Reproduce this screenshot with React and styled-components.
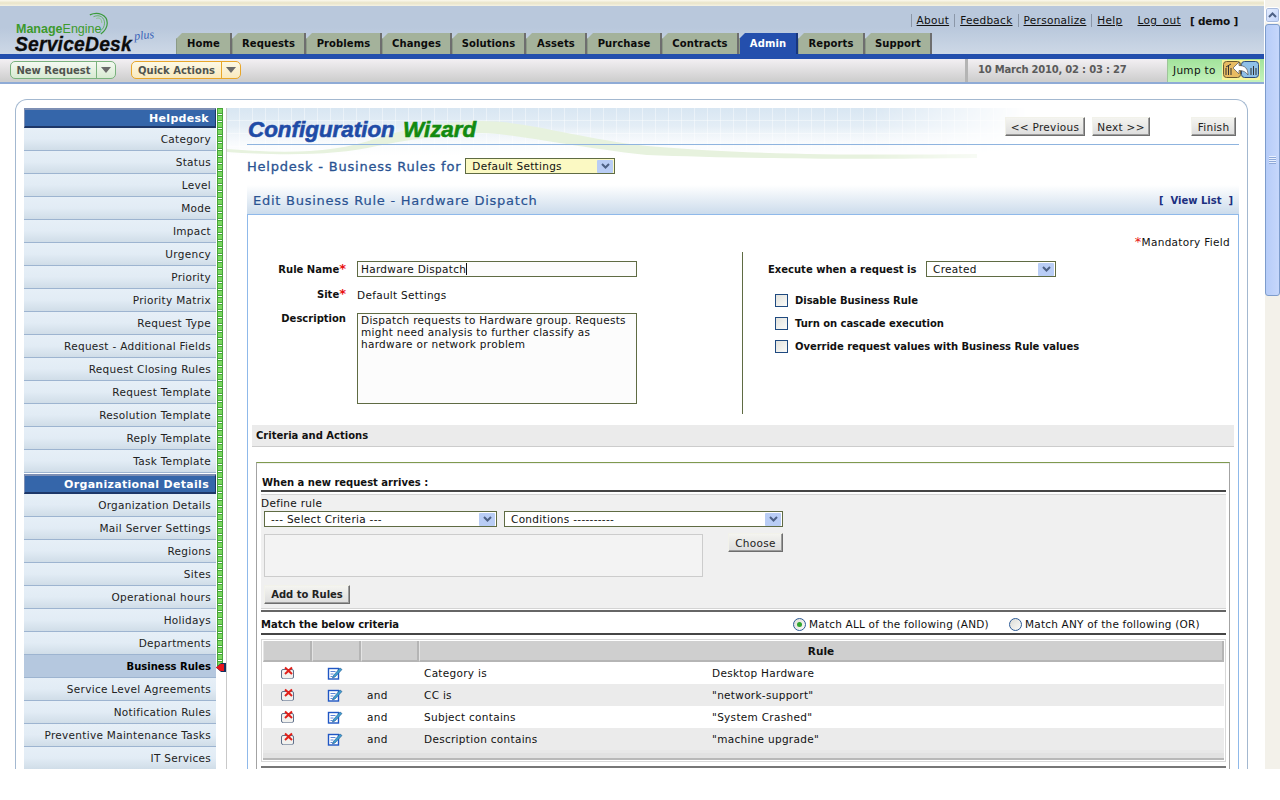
import React from "react";
import styled, { createGlobalStyle } from "styled-components";

const Global = createGlobalStyle`
    html, body {
        margin: 0;
        padding: 0;
        height: 100%;
        overflow: hidden;
        background: #ffffff;
    }
    * {
        box-sizing: border-box;
    }
    body {
        font-family: "DejaVu Sans", Verdana, sans-serif;
        font-size: 10.5px;
        letter-spacing: 0.3px;
        color: #111111;
    }
`;

const TABS = [
    ["Home", 56],
    ["Requests", 74],
    ["Problems", 76],
    ["Changes", 70],
    ["Solutions", 74],
    ["Assets", 61],
    ["Purchase", 75],
    ["Contracts", 77],
    ["Admin", 59],
    ["Reports", 67],
    ["Support", 67],
];

const HELPDESK = [
    "Category",
    "Status",
    "Level",
    "Mode",
    "Impact",
    "Urgency",
    "Priority",
    "Priority Matrix",
    "Request Type",
    "Request - Additional Fields",
    "Request Closing Rules",
    "Request Template",
    "Resolution Template",
    "Reply Template",
    "Task Template",
];

const ORG = [
    "Organization Details",
    "Mail Server Settings",
    "Regions",
    "Sites",
    "Operational hours",
    "Holidays",
    "Departments",
    "Business Rules",
    "Service Level Agreements",
    "Notification Rules",
    "Preventive Maintenance Tasks",
    "IT Services",
];

const RULES = [
    ["", "Category is", "Desktop Hardware"],
    ["and", "CC is", '"network-support"'],
    ["and", "Subject contains", '"System Crashed"'],
    ["and", "Description contains", '"machine upgrade"'],
];

function Chevron() {
    return (
        <svg width="9" height="6" viewBox="0 0 9 6">
            <path d="M1 1l3.500 3.500L8 1" fill="none" stroke="#4d6185" strokeWidth="2" />
        </svg>
    );
}

function Select({ value, width, tone }) {
    return (
        <SelectBox $w={width} $tone={tone}>
            <span>{value}</span>
            <SelectArrow>
                <Chevron />
            </SelectArrow>
        </SelectBox>
    );
}

function DeleteIcon() {
    return (
        <svg width="16" height="14" viewBox="0 0 16 14">
            <rect x="1.500" y="3.500" width="12" height="9" rx="1.500" fill="#f1f1ee" stroke="#5f6f8a" />
            <path d="M3 12.500h10" stroke="#9aa5b5" />
            <path d="M5 1.500l7 6.500M12 1.500L5 8" stroke="#e0201a" strokeWidth="2" />
        </svg>
    );
}

function EditIcon() {
    return (
        <svg width="16" height="14" viewBox="0 0 16 14">
            <rect x="1.500" y="2.500" width="10" height="10.500" fill="#ffffff" stroke="#1f56c4" strokeWidth="1.400" />
            <path d="M3.500 5.500h5M3.500 8h3M3.500 10.500h2" stroke="#5e86d8" />
            <path d="M6 10l7-8 2 1.500-7 7.500-2.500 1z" fill="#3f9fd0" stroke="#24558f" strokeWidth="0.600" />
        </svg>
    );
}

function JumpIcon() {
    return (
        <JumpFrame>
            <svg width="36" height="20" viewBox="0 0 36 20">
                <rect x="0.500" y="1.500" width="17" height="16" rx="3" fill="#e8bb62" stroke="#6a5a30" />
                <rect x="18.500" y="1.500" width="17" height="16" rx="3" fill="#8fc0e8" stroke="#2c4a78" />
                <path d="M3 8v7M5.500 6v9M8 8v7M3 7l5-3M28 8v7M30.500 6v9M33 8v7" stroke="#333333" strokeWidth="1" />
                <path
                    d="M10 8l6-6v3.500c6 0 9 3 9 9.500-2-3-4.500-4.500-9-4.500v3.500z"
                    fill="#ffffff"
                    stroke="#555555"
                    strokeWidth="0.700"
                />
            </svg>
        </JumpFrame>
    );
}

function Logo() {
    return (
        <LogoBox>
            <LogoArcs width="22" height="24" viewBox="0 0 24 26">
                <path d="M2 3c9-4 19 0 19 9 0 5-3 9-7 12" fill="none" stroke="#3b9b3c" strokeWidth="1.300" />
                <path d="M6 5c7-3 12 1 12 7 0 4-2 7-5 9" fill="none" stroke="#5cb05c" />
                <path d="M9 7c5-2 6 2 6 5" fill="none" stroke="#86c686" />
            </LogoArcs>
            <LogoTop>
                <b>Manage</b>Engine
            </LogoTop>
            <LogoName>ServiceDesk</LogoName>
            <LogoPlus>plus</LogoPlus>
        </LogoBox>
    );
}

export default function App() {
    return (
        <Frame>
            <Global />
            <Page>
                <TopStrip />
                <Header>
                    <Logo />
                    <HeaderRight>
                        <TopLinks>
                            <TopLink>About</TopLink>
                            <TopLink>Feedback</TopLink>
                            <TopLink>Personalize</TopLink>
                            <TopLink>Help</TopLink>
                            <LogOut>Log out</LogOut>
                            <Who>[ demo ]</Who>
                        </TopLinks>
                        <Tabs>
                            {TABS.map(([name, w]) => (
                                <Tab key={name} $w={w} $active={name === "Admin"}>
                                    {name}
                                </Tab>
                            ))}
                        </Tabs>
                    </HeaderRight>
                </Header>
                <BlueBar />
                <Toolbar>
                    <ToolButtons>
                        <SplitButton $w={106} $tone="green">
                            <SplitLabel>New Request</SplitLabel>
                            <SplitArrow $tone="green" />
                        </SplitButton>
                        <SplitButton $w={110} $tone="orange">
                            <SplitLabel>Quick Actions</SplitLabel>
                            <SplitArrow $tone="orange" />
                        </SplitButton>
                    </ToolButtons>
                    <DateCell>10 March 2010, 02 : 03 : 27</DateCell>
                    <JumpCell>
                        <JumpText>Jump to</JumpText>
                        <JumpIcon />
                    </JumpCell>
                </Toolbar>

                <Panel>
                    <Sidebar>
                        <Menu>
                            <MenuHead>Helpdesk</MenuHead>
                            {HELPDESK.map((item) => (
                                <MenuItem key={item}>{item}</MenuItem>
                            ))}
                            <MenuHead $gap>Organizational Details</MenuHead>
                            {ORG.map((item) => (
                                <MenuItem key={item} $active={item === "Business Rules"}>
                                    {item}
                                </MenuItem>
                            ))}
                        </Menu>
                        <Rail>
                            <Marker width="11" height="11" viewBox="0 0 11 11">
                                <path d="M0 5.500L5 1h5v9H5z" fill="#14305e" />
                                <path d="M0 5.500L4.500 2H8v7H4.500z" fill="#e8141c" />
                            </Marker>
                        </Rail>
                    </Sidebar>

                    <Content>
                        <Banner>
                            <BannerWave viewBox="0 0 800 60">
                                <path
                                    d="M0 41C60 46 110 45 150 30C180 20 220 13 255 13C300 13 350 30 420 38C500 45 600 48 750 46L750 50C600 52 500 50 420 47C340 38 290 26 255 25C220 26 180 32 150 38C110 47 60 48 0 44Z"
                                    fill="#e7f2de"
                                />
                            </BannerWave>
                        </Banner>
                        <WizardHead>
                            <WizardTitle>
                                Configuration <em>Wizard</em>
                            </WizardTitle>
                            <WizardButtons>
                                <GrayButton $w={80}>&lt;&lt; Previous</GrayButton>
                                <GrayButton $w={58}>Next &gt;&gt;</GrayButton>
                                <FinishButton $w={45}>Finish</FinishButton>
                            </WizardButtons>
                        </WizardHead>
                        <ForRow>
                            <ForLabel>Helpdesk - Business Rules for</ForLabel>
                            <Select value="Default Settings" width={150} tone="yellow" />
                        </ForRow>
                        <EditBar>
                            <EditTitle>Edit Business Rule - Hardware Dispatch</EditTitle>
                            <ViewList>[ &nbsp;View List &nbsp;]</ViewList>
                        </EditBar>

                        <FormBox>
                            <Mandatory>
                                <Star>*</Star>Mandatory Field
                            </Mandatory>
                            <FormColumns>
                                <LeftForm>
                                    <FieldRow $h={25}>
                                        <FieldLabel $top={3}>
                                            Rule Name<Star>*</Star>
                                        </FieldLabel>
                                        <TextField>
                                            Hardware Dispatch
                                            <Caret />
                                        </TextField>
                                    </FieldRow>
                                    <FieldRow $h={27}>
                                        <FieldLabel $top={3}>
                                            Site<Star>*</Star>
                                        </FieldLabel>
                                        <SiteValue>Default Settings</SiteValue>
                                    </FieldRow>
                                    <FieldRow $h={91}>
                                        <FieldLabel $top={0}>Description</FieldLabel>
                                        <DescArea
                                            readOnly
                                            defaultValue="Dispatch requests to Hardware group. Requests might need analysis to further classify as hardware or network problem"
                                        />
                                    </FieldRow>
                                </LeftForm>
                                <RightForm>
                                    <ExecuteRow>
                                        <ExecuteLabel>Execute when a request is</ExecuteLabel>
                                        <Select value="Created" width={130} />
                                    </ExecuteRow>
                                    <CheckList>
                                        <CheckRow>
                                            <CheckBox />
                                            Disable Business Rule
                                        </CheckRow>
                                        <CheckRow>
                                            <CheckBox />
                                            Turn on cascade execution
                                        </CheckRow>
                                        <CheckRow>
                                            <CheckBox />
                                            Override request values with Business Rule values
                                        </CheckRow>
                                    </CheckList>
                                </RightForm>
                            </FormColumns>
                            <SectionBar>Criteria and Actions</SectionBar>
                            <CriteriaBox>
                                <ArriveTitle>When a new request arrives :</ArriveTitle>
                                <DefinePanel>
                                    <DefineLabel>Define rule</DefineLabel>
                                    <SelectRow>
                                        <Select value="--- Select Criteria ---" width={233} />
                                        <Select value="Conditions ----------" width={279} />
                                    </SelectRow>
                                    <ChooseRow>
                                        <ValueBox />
                                        <GrayButton $w={55}>Choose</GrayButton>
                                    </ChooseRow>
                                    <AddButton>Add to Rules</AddButton>
                                </DefinePanel>
                                <MatchRow>
                                    <MatchTitle>Match the below criteria</MatchTitle>
                                    <RadioGroup>
                                        <RadioItem $w={216}>
                                            <Radio $on />
                                            Match ALL of the following (AND)
                                        </RadioItem>
                                        <RadioItem $w={217}>
                                            <Radio />
                                            Match ANY of the following (OR)
                                        </RadioItem>
                                    </RadioGroup>
                                </MatchRow>
                                <RuleTable>
                                    <HeadRow>
                                        <HeadCell />
                                        <HeadCell />
                                        <HeadCell />
                                        <HeadCell>
                                            <b>Rule</b>
                                        </HeadCell>
                                    </HeadRow>
                                    {RULES.map(([join, field, value], i) => (
                                        <RuleRow key={field} $odd={i % 2 === 1}>
                                            <IconCell>
                                                <DeleteIcon />
                                            </IconCell>
                                            <IconCell $shift>
                                                <EditIcon />
                                            </IconCell>
                                            <JoinCell>{join}</JoinCell>
                                            <FieldCell>{field}</FieldCell>
                                            <span>{value}</span>
                                        </RuleRow>
                                    ))}
                                    <TableFoot />
                                </RuleTable>
                                <BottomRule />
                            </CriteriaBox>
                        </FormBox>
                    </Content>
                </Panel>
            </Page>
            <Scrollbar>
                <ScrollButton>
                    <svg width="9" height="6" viewBox="0 0 9 6">
                        <path d="M1 5l3.500-3.500L8 5" fill="none" stroke="#4d6185" strokeWidth="2" />
                    </svg>
                </ScrollButton>
                <ScrollThumb>
                    <ThumbGrip />
                </ScrollThumb>
            </Scrollbar>
        </Frame>
    );
}

const Frame = styled.div`
    display: flex;
    width: 1280px;
    height: 769px;
    overflow: hidden;
    background: #ffffff;
`;

const Page = styled.div`
    width: 1264px;
    flex: none;
`;

const TopStrip = styled.div`
    height: 6px;
    background: linear-gradient(#fbf9ee, #e9e4c8 50%, #f4f2e4);
`;

const Header = styled.div`
    display: flex;
    height: 48px;
    background: linear-gradient(#b9c8dc 0%, #b9c8dc 45%, #cdd8e6 100%);
`;

const LogoBox = styled.div`
    position: relative;
    width: 176px;
    flex: none;
    padding: 17px 0 0 15px;
`;

const LogoArcs = styled.svg`
    position: absolute;
    left: 88px;
    top: 6px;
`;

const LogoTop = styled.div`
    font-family: "Liberation Sans", Arial, sans-serif;
    font-size: 12.5px;
    line-height: 13px;
    letter-spacing: 0;
    color: #3c9a2c;
    padding-left: 1px;
    b {
        font-weight: 700;
    }
`;

const LogoName = styled.div`
    font-family: "Liberation Sans", Arial, sans-serif;
    font-size: 19.3px;
    font-weight: 700;
    font-style: italic;
    line-height: 17px;
    letter-spacing: 0.2px;
    color: #0c0c0c;
    -webkit-text-stroke: 0.3px currentColor;
`;

const LogoPlus = styled.div`
    position: absolute;
    left: 134px;
    top: 22px;
    font-family: "Liberation Serif", serif;
    font-style: italic;
    font-size: 12px;
    letter-spacing: 0;
    color: #3a63b8;
    transform: rotate(-6deg);
`;

const HeaderRight = styled.div`
    flex: 1;
    display: flex;
    flex-direction: column;
    justify-content: space-between;
`;

const TopLinks = styled.div`
    display: flex;
    justify-content: flex-end;
    align-items: center;
    height: 13px;
    margin-top: 8px;
    padding-right: 26px;
`;

const TopLink = styled.a`
    padding: 0 5px;
    border-left: 1px solid #8b97a8;
    text-decoration: underline;
    color: #111111;
    line-height: 13px;
`;

const LogOut = styled(TopLink)`
    margin-left: 10px;
    border-left: 0;
    padding: 0;
    word-spacing: 2px;
`;

const Who = styled.span`
    margin-left: 9px;
    font-weight: 700;
    letter-spacing: -0.2px;
`;

const Tabs = styled.div`
    display: flex;
    height: 21px;
`;

const Tab = styled.div`
    width: ${(p) => p.$w}px;
    display: flex;
    align-items: center;
    justify-content: center;
    font-size: 10px;
    font-weight: 700;
    letter-spacing: 0.1px;
    color: ${(p) => (p.$active ? "#ffffff" : "#0c0c0c")};
    background: ${(p) => (p.$active ? "#244fad" : "#a4b29b")};
    border-right: 2px solid ${(p) => (p.$active ? "#17367e" : "#6e6e6e")};
    border-left: 1px solid #8b9a86;
    clip-path: polygon(6px 0, 100% 0, 100% 100%, 0 100%, 0 6px);
`;

const BlueBar = styled.div`
    height: 5px;
    background: #234fad;
`;

const Toolbar = styled.div`
    display: flex;
    height: 25px;
    background: linear-gradient(#f3f0f3, #cfcfcf 92%);
    border-bottom: 2px solid #8fabd6;
`;

const ToolButtons = styled.div`
    flex: 1;
    display: flex;
    align-items: center;
    gap: 15px;
    padding: 0 0 2px 10px;
`;

const TONES = {
    green: { border: "#79b27d", bg: "linear-gradient(#f4f9f1, #d7ead2)" },
    orange: { border: "#e8a62a", bg: "linear-gradient(#fdf9e6, #f9e9bd)" },
};

const SplitButton = styled.div`
    width: ${(p) => p.$w}px;
    height: 18px;
    display: flex;
    border: 1px solid ${(p) => TONES[p.$tone].border};
    border-radius: 5px;
    background: ${(p) => TONES[p.$tone].bg};
    overflow: hidden;
`;

const SplitLabel = styled.div`
    flex: 1;
    display: flex;
    align-items: center;
    justify-content: center;
    padding-top: 1px;
    font-size: 10px;
    font-weight: 700;
    letter-spacing: 0;
    color: #50544f;
`;

const SplitArrow = styled.div`
    position: relative;
    width: 19px;
    flex: none;
    border-left: 1px solid ${(p) => TONES[p.$tone].border};
    &::after {
        content: "";
        position: absolute;
        left: 4px;
        top: 5px;
        border: 5px solid transparent;
        border-top: 6px solid #6a6a6a;
        border-bottom: 0;
    }
`;

const DateCell = styled.div`
    width: 202px;
    display: flex;
    align-items: center;
    padding: 0 0 2px 10px;
    border-left: 3px solid #b4b4b4;
    font-size: 10px;
    font-weight: 700;
    letter-spacing: -0.22px;
    color: #5a5a5a;
`;

const JumpCell = styled.div`
    width: 97px;
    display: flex;
    align-items: center;
    padding-left: 5px;
    background: linear-gradient(#a2e39b, #c4f2bc);
    border-left: 1px solid #9ec59a;
`;

const JumpText = styled.span`
    width: 49px;
    flex: none;
    padding-bottom: 2px;
`;

const JumpFrame = styled.div`
    display: flex;
    width: 38px;
    height: 20px;
    padding: 0 1px;
    margin-bottom: 1px;
    background: #f8f59a;
`;

const Panel = styled.div`
    display: flex;
    margin: 15px 16px 0 15px;
    height: 700px;
    padding: 8px 8px 0 8px;
    border: 1px solid #a3b8d0;
    border-bottom: 0;
    border-radius: 12px 12px 0 0;
`;

const Sidebar = styled.div`
    display: flex;
    width: 203px;
    flex: none;
    border-right: 1px solid #c9c9c9;
`;

const Menu = styled.div`
    width: 192px;
    flex: none;
`;

const MenuHead = styled.div`
    height: 20px;
    margin-top: ${(p) => (p.$gap ? "1px" : "0")};
    display: flex;
    align-items: center;
    justify-content: flex-end;
    padding-right: 6px;
    font-size: 11px;
    font-weight: 700;
    letter-spacing: 0.3px;
    color: #ffffff;
    background: #3566aa;
    border-top: 2px solid #7d8fb4;
    border-left: 1px solid #7d8fb4;
    border-bottom: 2px solid #1d3768;
    border-right: 1px solid #1d3768;
`;

const MenuItem = styled.div`
    height: 23px;
    display: flex;
    align-items: center;
    justify-content: flex-end;
    padding-right: 5px;
    font-size: ${(p) => (p.$active ? "10px" : "10.5px")};
    font-weight: ${(p) => (p.$active ? 700 : 400)};
    letter-spacing: ${(p) => (p.$active ? "0" : "0.3px")};
    color: ${(p) => (p.$active ? "#000000" : "#222222")};
    background: ${(p) => (p.$active ? "#b5c8df" : "linear-gradient(#e6eff7, #e2ecf5 50%, #d0dde8)")};
    border-bottom: 1px solid #9db4d0;
`;

const Rail = styled.div`
    position: relative;
    width: 6px;
    height: 558px;
    margin-left: 1px;
    flex: none;
    background-image:
        linear-gradient(90deg, #47a33a 1px, transparent 1px, transparent 5px, #47a33a 5px),
        repeating-linear-gradient(#47a33a 0 1px, #7bd960 1px 5px, #47a33a 5px 6px, #ffffff 6px 7px);
`;

const Marker = styled.svg`
    position: absolute;
    left: -1px;
    bottom: -7px;
`;

const Content = styled.div`
    position: relative;
    flex: 1;
    padding: 0 0 0 20px;
    min-width: 0;
`;

const Banner = styled.div`
    position: absolute;
    left: 0;
    top: 0;
    width: 800px;
    height: 60px;
    background-image:
        linear-gradient(90deg, #ffffff00 12px, #ffffff66 12px),
        linear-gradient(#ffffff00 12px, #ffffff66 12px),
        linear-gradient(rgba(255, 255, 255, 0) 30%, #ffffff 80%),
        linear-gradient(#d8e6f2, #ffffff);
    background-size: 13px 13px, 13px 13px, 100% 100%, 100% 100%;
    -webkit-mask-image: linear-gradient(90deg, #000 80%, transparent);
    mask-image: linear-gradient(90deg, #000 80%, transparent);
`;

const BannerWave = styled.svg`
    position: absolute;
    left: 0;
    top: 0;
    width: 800px;
    height: 60px;
`;

const WizardHead = styled.div`
    position: relative;
    display: flex;
    justify-content: space-between;
    height: 37px;
    border-bottom: 1px solid #8fb4df;
`;

const WizardTitle = styled.div`
    padding: 9px 0 0 1px;
    font-family: "Liberation Sans", Arial, sans-serif;
    font-size: 22.4px;
    font-weight: 700;
    font-style: italic;
    letter-spacing: 0;
    line-height: 26px;
    color: #1f4ba6;
    -webkit-text-stroke: 0.6px currentColor;
    em {
        margin-left: 2px;
        color: #128a10;
    }
`;

const WizardButtons = styled.div`
    display: flex;
    gap: 7px;
    padding: 9px 3px 0 0;
    align-items: flex-start;
`;

const GrayButton = styled.div`
    width: ${(p) => p.$w}px;
    height: 19px;
    flex: none;
    display: flex;
    align-items: center;
    justify-content: center;
    color: #222222;
    background: linear-gradient(#f4f4f0, #dddddd);
    border: 1px solid;
    border-color: #f2f2ea #6e6e6e #6e6e6e #f2f2ea;
    box-shadow: inset -1px -1px 0 #9c9c9c;
`;

const FinishButton = styled(GrayButton)`
    margin-left: 34px;
`;

const ForRow = styled.div`
    position: relative;
    display: flex;
    align-items: center;
    gap: 4px;
    height: 16px;
    margin-top: 13px;
`;

const ForLabel = styled.div`
    font-size: 13px;
    font-weight: 400;
    letter-spacing: 0.78px;
    color: #2a5392;
    -webkit-text-stroke: 0.3px currentColor;
`;

const SelectBox = styled.div`
    width: ${(p) => p.$w}px;
    height: 16px;
    flex: none;
    display: flex;
    align-items: center;
    justify-content: space-between;
    padding: 0 1px 0 6px;
    background: ${(p) => (p.$tone === "yellow" ? "#fbf9c3" : "#ffffff")};
    border: 1px solid #5f6b43;
`;

const SelectArrow = styled.div`
    width: 16px;
    height: 13px;
    display: flex;
    align-items: center;
    justify-content: center;
    background: #b9cdf5;
    border-radius: 1px;
`;

const EditBar = styled.div`
    display: flex;
    align-items: center;
    justify-content: space-between;
    height: 29px;
    margin-top: 11px;
    padding: 1px 6px 0 6px;
    background: linear-gradient(#ffffff, #ccdcec);
`;

const EditTitle = styled.div`
    font-size: 13px;
    letter-spacing: 0.75px;
    color: #2a5392;
    -webkit-text-stroke: 0.2px currentColor;
`;

const ViewList = styled.div`
    font-size: 10px;
    font-weight: 700;
    letter-spacing: 0;
    color: #1b2f80;
`;

const FormBox = styled.div`
    height: 560px;
    padding: 21px 4px 0 4px;
    border: 1px solid #8fb9ea;
    border-bottom: 0;
`;

const Mandatory = styled.div`
    height: 13px;
    text-align: right;
    line-height: 13px;
    padding-right: 4px;
`;

const Star = styled.span`
    color: #e81010;
    font-size: 13px;
    line-height: 10px;
`;

const FormColumns = styled.div`
    display: flex;
    margin-top: 3px;
    height: 162px;
`;

const LeftForm = styled.div`
    width: 491px;
    flex: none;
    padding-top: 9px;
    display: flex;
    flex-direction: column;
    border-right: 1px solid #5f6b43;
`;

const FieldRow = styled.div`
    display: flex;
    height: ${(p) => p.$h}px;
    flex: none;
`;

const FieldLabel = styled.div`
    width: 94px;
    flex: none;
    padding-top: ${(p) => p.$top}px;
    text-align: right;
    font-weight: 700;
    font-size: 10px;
    letter-spacing: 0;
`;

const TextField = styled.div`
    width: 280px;
    height: 16px;
    margin-left: 11px;
    display: flex;
    align-items: center;
    padding-left: 3px;
    background: #fcfcfc;
    border: 1px solid #5f6b43;
`;

const Caret = styled.span`
    display: block;
    width: 1px;
    height: 12px;
    background: #111111;
`;

const SiteValue = styled.div`
    margin-left: 11px;
    padding-top: 3px;
`;

const DescArea = styled.textarea`
    display: block;
    width: 280px;
    height: 91px;
    margin-left: 11px;
    padding: 0 3px;
    resize: none;
    overflow: hidden;
    outline: 0;
    font: inherit;
    line-height: 12px;
    letter-spacing: inherit;
    color: #111111;
    background: #fcfcfc;
    border: 1px solid #5f6b43;
    border-radius: 0;
`;

const RightForm = styled.div`
    flex: 1;
    padding: 9px 0 0 25px;
`;

const ExecuteRow = styled.div`
    display: flex;
    align-items: center;
    height: 16px;
`;

const ExecuteLabel = styled.div`
    width: 158px;
    flex: none;
    font-size: 10px;
    font-weight: 700;
    letter-spacing: 0;
`;

const CheckList = styled.div`
    display: flex;
    flex-direction: column;
    margin-top: 17px;
    padding-left: 7px;
    gap: 10px;
`;

const CheckRow = styled.div`
    display: flex;
    align-items: center;
    gap: 7px;
    height: 13px;
    font-size: 10px;
    font-weight: 700;
    letter-spacing: -0.04px;
`;

const CheckBox = styled.span`
    width: 13px;
    height: 13px;
    flex: none;
    background: linear-gradient(135deg, #e2e2dc, #fbfbf9);
    border: 1px solid #1f4a80;
`;

const SectionBar = styled.div`
    display: flex;
    align-items: center;
    height: 22px;
    margin-top: 11px;
    padding-left: 4px;
    font-size: 10px;
    font-weight: 700;
    letter-spacing: 0;
    background: #ebebeb;
    border-bottom: 1px solid #cccccc;
`;

const CriteriaBox = styled.div`
    margin: 15px 4px 0 4px;
    padding: 0 3px 0 4px;
    height: 400px;
    border: 1px solid #a3a3a3;
    border-top: 1px solid #7f9a4f;
    border-bottom: 0;
    box-shadow: inset 0 1px 0 #f0f0f0;
`;

const ArriveTitle = styled.div`
    height: 29px;
    padding: 14px 0 0 1px;
    font-size: 10px;
    font-weight: 700;
    letter-spacing: 0;
    border-bottom: 2px solid #454545;
`;

const DefinePanel = styled.div`
    height: 115px;
    margin-top: 2px;
    padding: 1px 3px 0 0;
    background: #f0f0f0;
    border-top: 1px solid #d4d4d4;
    border-bottom: 1px solid #d4d4d4;
`;

const DefineLabel = styled.div`
    height: 14px;
    line-height: 14px;
`;

const SelectRow = styled.div`
    display: flex;
    gap: 7px;
    margin-top: 1px;
    padding-left: 3px;
`;

const ChooseRow = styled.div`
    display: flex;
    align-items: flex-start;
    margin-top: 6px;
    padding-left: 3px;
    gap: 25px;
`;

const ValueBox = styled.div`
    width: 439px;
    height: 43px;
    margin-top: 1px;
    background: #f3f3f3;
    border: 1px solid #cccccc;
`;

const AddButton = styled(GrayButton)`
    width: 86px;
    margin: 8px 0 0 3px;
    font-size: 10px;
    font-weight: 700;
    letter-spacing: 0;
`;

const MatchRow = styled.div`
    display: flex;
    align-items: center;
    justify-content: space-between;
    height: 25px;
    margin-top: 1px;
    padding-top: 3px;
    border-top: 2px solid #666666;
    border-bottom: 2px solid #454545;
`;

const MatchTitle = styled.div`
    font-size: 10px;
    font-weight: 700;
    letter-spacing: 0;
`;

const RadioGroup = styled.div`
    display: flex;
`;

const RadioItem = styled.div`
    width: ${(p) => p.$w}px;
    display: flex;
    align-items: center;
    gap: 3px;
    letter-spacing: 0.2px;
`;

const Radio = styled.span`
    position: relative;
    width: 13px;
    height: 13px;
    flex: none;
    border: 1px solid #2c5a96;
    border-radius: 50%;
    background: linear-gradient(135deg, #dcdcd6, #fbfbf9);
    &::after {
        content: "";
        display: ${(p) => (p.$on ? "block" : "none")};
        position: absolute;
        left: 3px;
        top: 3px;
        width: 5px;
        height: 5px;
        border-radius: 50%;
        background: #2fa62f;
    }
`;

const RuleTable = styled.div`
    margin: 4px 0 0;
    border: 1px solid #d8d8d8;
    padding: 1px;
`;

const HeadRow = styled.div`
    display: grid;
    grid-template-columns: 49px 49px 58px 1fr;
    height: 21px;
`;

const HeadCell = styled.div`
    display: flex;
    align-items: center;
    justify-content: center;
    background: #cfcfcf;
    border-bottom: 2px solid #b5b5b5;
    border-right: 2px solid #b5b5b5;
    border-left: 1px solid #e4e4e4;
    letter-spacing: 0;
`;

const RuleRow = styled.div`
    display: grid;
    grid-template-columns: 49px 49px 58px 293px 1fr;
    align-items: center;
    height: 22px;
    background: ${(p) => (p.$odd ? "#ebebeb" : "#ffffff")};
`;

const IconCell = styled.div`
    display: flex;
    justify-content: center;
    padding-right: ${(p) => (p.$shift ? "3px" : "0")};
`;

const JoinCell = styled.div`
    padding-left: 6px;
`;

const FieldCell = styled.div`
    padding-left: 5px;
`;

const TableFoot = styled.div`
    height: 10px;
    background: #e2e2e2;
    border-bottom: 2px solid #b8b8b8;
    border-top: 3px solid #e8e8e8;
`;

const BottomRule = styled.div`
    margin-top: 4px;
    height: 2px;
    background: #777777;
`;

const Scrollbar = styled.div`
    width: 16px;
    flex: none;
    padding-top: 7px;
    background: #f3f1ea;
    border-left: 1px solid #ffffff;
`;

const ScrollButton = styled.div`
    height: 16px;
    display: flex;
    align-items: center;
    justify-content: center;
    background: linear-gradient(135deg, #e6eefe, #c0d3fb);
    border: 1px solid #ffffff;
    border-radius: 3px;
    box-shadow: 0 0 0 1px #a9bbdd inset;
`;

const ScrollThumb = styled.div`
    height: 272px;
    margin-top: 1px;
    display: flex;
    align-items: center;
    justify-content: center;
    background: linear-gradient(90deg, #b6ccf8, #c6d7fb);
    border: 1px solid #7d9ccc;
    border-radius: 3px;
`;

const ThumbGrip = styled.span`
    width: 7px;
    height: 8px;
    background: repeating-linear-gradient(#e8f0ff 0 1px, #8fa9d8 1px 2px);
`;
